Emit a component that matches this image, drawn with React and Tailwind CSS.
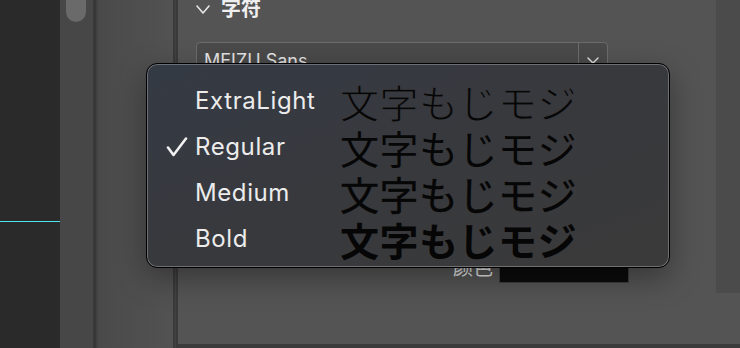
const WEIGHTS = [
    { label: 'ExtraLight', cls: 'font-normal [-webkit-text-stroke:1px_#393a3e]' },
    { label: 'Regular', cls: 'font-normal', checked: true },
    { label: 'Medium', cls: 'font-normal [-webkit-text-stroke:0.45px_#060606]' },
    { label: 'Bold', cls: 'font-bold' },
]

const SAMPLE = '文字もじモジ'

function Check() {
    return (
        <svg width="22" height="20" viewBox="0 0 22 20" fill="none">
            <path d="M2 10.5 L7.5 18 L20 1.5" stroke="#f0f0f0" strokeWidth="2.6" strokeLinecap="round" strokeLinejoin="round" />
        </svg>
    )
}

function Chevron({ w, h, color, sw }) {
    return (
        <svg width={w} height={h} viewBox={`0 0 ${w} ${h}`} fill="none">
            <path d={`M1 1 L${w / 2} ${h - 1} L${w - 1} 1`} stroke={color} strokeWidth={sw} strokeLinecap="round" strokeLinejoin="round" />
        </svg>
    )
}

function WeightMenu() {
    return (
        <div className="absolute left-[146px] top-[63px] w-[524px] h-[205px] rounded-[11px] border border-black bg-gradient-to-br from-[#343a44] via-[#38393d] to-[#3a3a3a] shadow-[inset_0_0_0_1px_rgba(255,255,255,0.28),0_10px_30px_rgba(0,0,0,0.35)] pt-[14px]">
            {WEIGHTS.map((w) => (
                <div key={w.label} className="flex items-center h-[46px]">
                    <div className="w-[48px] pl-[19px] flex items-center">
                        {w.checked && <Check />}
                    </div>
                    <div className="w-[145px] text-[24px] tracking-[0.6px] text-[#ececec] font-['Inter',sans-serif]">
                        {w.label}
                    </div>
                    <div className={`text-[39px] leading-none tracking-[0.5px] text-[#060606] font-['Noto_Sans_CJK_JP',sans-serif] ${w.cls}`}>
                        {SAMPLE}
                    </div>
                </div>
            ))}
        </div>
    )
}

export default function App() {
    return (
        <div className="relative w-[740px] h-[348px] overflow-hidden flex font-['Inter','Noto_Sans_CJK_SC',sans-serif]">

            {/* Canvas edge */}
            <div className="w-[60px] bg-[#2a2a2a] pt-[221px]">
                <div className="h-px bg-[#4ee4f2]" />
            </div>

            {/* Scrollbar */}
            <div className="w-[33px] bg-[#474747]">
                <div className="ml-[6px] w-[20px] h-[22px] rounded-b-full bg-[#6a6a6a]" />
            </div>
            <div className="w-[5px] bg-[#414141] border-l-[3px] border-[#383838]" />

            {/* Side panel */}
            <div className="w-[75px] bg-gradient-to-r from-[#4a4a4a] to-[#525252]" />
            <div className="w-[5px] bg-[#434343] border-x-2 border-[#3a3a3a]" />

            {/* Properties */}
            <div className="flex-1 flex flex-col bg-[#545454]">
                <div className="flex-1 flex">
                    <div className="flex-1 pl-[18px]">
                        <div className="flex items-center h-[18px] gap-[11px]">
                            <Chevron w={14} h={9} color="#e6e6e6" sw={1.6} />
                            <span className="text-[20px] leading-none font-bold text-[#efefef]">字符</span>
                        </div>

                        <div className="mt-[24px] w-[412px] h-[36px] flex rounded-[4px] border border-[#6c6c6c] bg-[#4a4a4a]">
                            <div className="flex-1 pl-[7px] pt-[4px] text-[18px] text-[#e4e4e4]">MEIZU Sans</div>
                            <div className="w-[29px] border-l border-[#6c6c6c] flex items-center justify-center">
                                <Chevron w={12} h={7} color="#dcdcdc" sw={1.5} />
                            </div>
                        </div>

                        <div className="mt-[175px] flex items-center gap-[6px]">
                            <div className="w-[297px] text-right text-[20px] text-[#e0e0e0]">颜色</div>
                            <div className="w-[130px] h-[30px] bg-[#0b0b0b] border border-[#3d3d3d]" />
                        </div>
                    </div>
                    <div className="w-[24px] h-[293px] bg-[#4b4b4b]" />
                </div>
                <div className="h-[4px] bg-[#3b3b3b]" />
            </div>

            <WeightMenu />
        </div>
    )
}
